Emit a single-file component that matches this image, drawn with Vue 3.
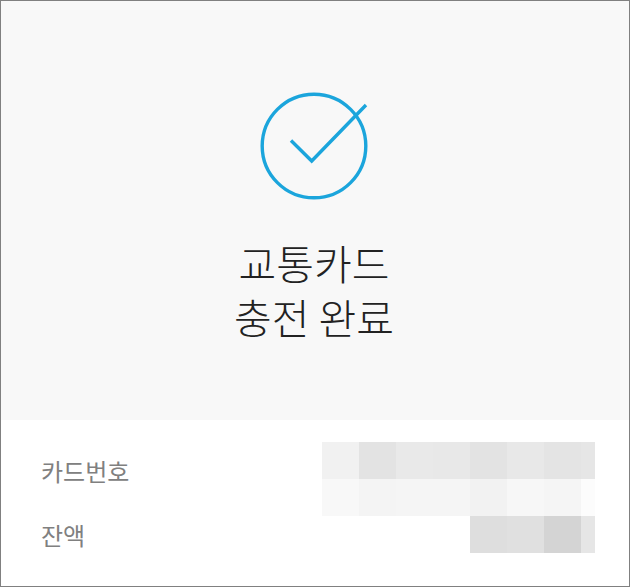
<script setup>
const titleLines = ['교통카드', '충전 완료']

const rows = [
    {
        label: '카드번호',
        mosaic: [
            ['#f1f1f1', '#e3e3e3', '#e9e9e9', '#e8e8e8', '#e3e3e3', '#e8e8e8', '#e4e4e4', '#e6e6e6'],
            ['#f8f8f8', '#f4f4f4', '#f5f5f5', '#f5f5f5', '#f2f2f2', '#f7f7f7', '#f5f5f5', '#fcfcfc'],
        ],
    },
    {
        label: '잔액',
        mosaic: [
            ['#dedede', '#e0e0e0', '#d4d4d4', '#e6e6e6'],
        ],
    },
]
</script>

<template>
    <main class="receipt">
        <section class="status">
            <svg class="status-icon" viewBox="0 0 108 108" fill="none" stroke="#1ba5dc" stroke-width="3.4" aria-hidden="true">
                <circle cx="54" cy="54" r="51.8" />
                <path d="M31 48.5 51.7 69 106 13" />
            </svg>

            <h1 class="status-title">
                <span v-for="line in titleLines" :key="line" class="status-line">{{ line }}</span>
            </h1>
        </section>

        <dl class="details">
            <div v-for="row in rows" :key="row.label" class="details-row">
                <dt class="details-label">
                    {{ row.label }}
                </dt>

                <dd class="details-value">
                    <div v-for="(line, index) in row.mosaic" :key="index" class="mosaic-line">
                        <span v-for="(color, i) in line" :key="i" class="mosaic-cell" :style="{ background: color }" />
                    </div>
                </dd>
            </div>
        </dl>
    </main>
</template>

<style>
body {
    background: #fff;
}
</style>

<style scoped>
.receipt {
    box-sizing: border-box;
    min-height: 100vh;
    border: 1px solid #808080;
    background: #fff;
    font-family: "Noto Sans CJK KR", "Noto Sans", sans-serif;
}

.status {
    display: flex;
    flex-direction: column;
    align-items: center;
    row-gap: 35px;
    padding: 91px 2px 77px 0;
    background: #f8f8f8;
}

.status-icon {
    width: 108px;
    height: 108px;
    overflow: visible;
}

.status-title {
    margin: 0;
    color: #222;
    font-size: 41px;
    font-weight: 300;
    line-height: 54px;
    text-align: center;
}

.status-line {
    display: block;
}

.details {
    margin: 0;
    padding: 22px 34px 32px 40px;
}

.details-row {
    display: flex;
    align-items: flex-start;
    justify-content: space-between;
}

.details-label {
    color: #808080;
    font-size: 24px;
    line-height: 37px;
}

.details-row:first-child .details-label {
    padding-top: 10px;
}

.details-value {
    margin: 0;
}

.mosaic-line {
    display: flex;
}

.mosaic-cell {
    width: 37px;
    height: 37px;
}

.mosaic-cell:last-child {
    width: 14px;
}
</style>
